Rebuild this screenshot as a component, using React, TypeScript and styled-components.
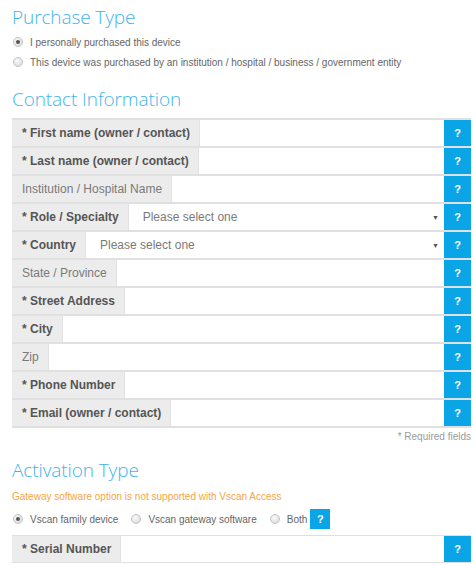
import React from "react";
import styled, { createGlobalStyle } from "styled-components";

const Global = createGlobalStyle`
  html, body { margin: 0; padding: 0; background: #fff; }
  body { font-family: "Liberation Sans", Arial, sans-serif; }
`;

const Page = styled.div`
  width: 459px;
  padding: 0 5px 0 12px;
  display: flex;
  flex-direction: column;
`;

const Heading = styled.h2<{ $top: number }>`
  margin: ${(p) => p.$top}px 0 0 0;
  font-family: "Open Sans", sans-serif;
  font-weight: 300;
  font-size: 19px;
  line-height: 24px;
  color: #3fb4ec;
  letter-spacing: -0.1px;
`;

const RadioLine = styled.label<{ $top: number }>`
  display: flex;
  align-items: center;
  gap: 7px;
  margin-top: ${(p) => p.$top}px;
  height: 14px;
  font-size: 10px;
  color: #666;
  padding-left: 1px;
`;

const Radio = styled.span<{ $checked?: boolean }>`
  width: 8px;
  height: 8px;
  border-radius: 50%;
  border: 1px solid #c4c4c4;
  background: radial-gradient(circle at 40% 35%, #fafafa, #d6d6d6);
  display: inline-flex;
  align-items: center;
  justify-content: center;
  flex: none;
  &::after {
    content: "";
    width: 4px;
    height: 4px;
    border-radius: 50%;
    background: ${(p) => (p.$checked ? "#555" : "transparent")};
  }
`;

const Rows = styled.div`
  margin-top: 7px;
  display: flex;
  flex-direction: column;
  gap: 2px;
  padding: 2px 0;
  background: #e0e0e0;
`;

const Row = styled.div`
  display: flex;
  height: 26px;
  background: #fff;
`;

const Label = styled.div<{ $required?: boolean }>`
  display: flex;
  align-items: center;
  padding: 0 9px 0 10px;
  background: #ececec;
  border-right: 1px solid #e2e2e2;
  font-size: 12px;
  font-weight: ${(p) => (p.$required ? 700 : 400)};
  color: ${(p) => (p.$required ? "#555" : "#7a7a7a")};
  white-space: nowrap;
`;

const Field = styled.div`
  flex: 1;
  display: flex;
  align-items: center;
  justify-content: space-between;
  padding: 0 5px 0 14px;
  font-size: 12px;
  color: #7a7a7a;
`;

const Arrow = styled.span`
  font-size: 7px;
  color: #555;
`;

const Help = styled.div<{ $w?: number; $h?: number }>`
  width: ${(p) => p.$w ?? 27}px;
  height: ${(p) => p.$h ?? 26}px;
  flex: none;
  background: #0aa5e7;
  color: #fff;
  font-weight: 700;
  font-size: 11px;
  display: flex;
  align-items: center;
  justify-content: center;
`;

const Required = styled.div`
  text-align: right;
  font-size: 10px;
  color: #9a9a9a;
  margin-top: 3px;
  line-height: 12px;
`;

const Note = styled.div`
  margin-top: 9px;
  font-size: 10px;
  color: #f7a445;
  line-height: 12px;
`;

const Options = styled.div`
  display: flex;
  align-items: center;
  margin-top: 6px;
  padding-left: 1px;
`;

const Option = styled.label`
  display: flex;
  align-items: center;
  gap: 7px;
  margin-right: 13px;
  font-size: 10px;
  color: #666;
  &:last-of-type { margin-right: 3px; }
`;

const SerialRow = styled.div`
  margin-top: 6px;
  display: flex;
  height: 26px;
  border-top: 1px solid #e0e0e0;
  border-bottom: 1px solid #e0e0e0;
`;

type F = { label: string; req?: boolean; select?: boolean };
const fields: F[] = [
  { label: "* First name (owner / contact)", req: true },
  { label: "* Last name (owner / contact)", req: true },
  { label: "Institution / Hospital Name" },
  { label: "* Role / Specialty", req: true, select: true },
  { label: "* Country", req: true, select: true },
  { label: "State / Province" },
  { label: "* Street Address", req: true },
  { label: "* City", req: true },
  { label: "Zip" },
  { label: "* Phone Number", req: true },
  { label: "* Email (owner / contact)", req: true },
];

export default function App() {
  return (
    <Page>
      <Global />
      <Heading $top={5}>Purchase Type</Heading>
      <RadioLine $top={6}>
        <Radio $checked />I personally purchased this device
      </RadioLine>
      <RadioLine $top={6}>
        <Radio />This device was purchased by an institution / hospital / business / government entity
      </RadioLine>
      <Heading $top={18}>Contact Information</Heading>
      <Rows>
        {fields.map((f) => (
          <Row key={f.label}>
            <Label $required={f.req}>{f.label}</Label>
            <Field>
              {f.select ? (
                <>
                  <span>Please select one</span>
                  <Arrow>▼</Arrow>
                </>
              ) : null}
            </Field>
            <Help>?</Help>
          </Row>
        ))}
      </Rows>
      <Required>* Required fields</Required>
      <Heading $top={15}>Activation Type</Heading>
      <Note>Gateway software option is not supported with Vscan Access</Note>
      <Options>
        <Option>
          <Radio $checked />Vscan family device
        </Option>
        <Option>
          <Radio />Vscan gateway software
        </Option>
        <Option>
          <Radio />Both
        </Option>
        <Help $w={20} $h={20}>?</Help>
      </Options>
      <SerialRow>
        <Label $required>* Serial Number</Label>
        <Field />
        <Help>?</Help>
      </SerialRow>
    </Page>
  );
}
